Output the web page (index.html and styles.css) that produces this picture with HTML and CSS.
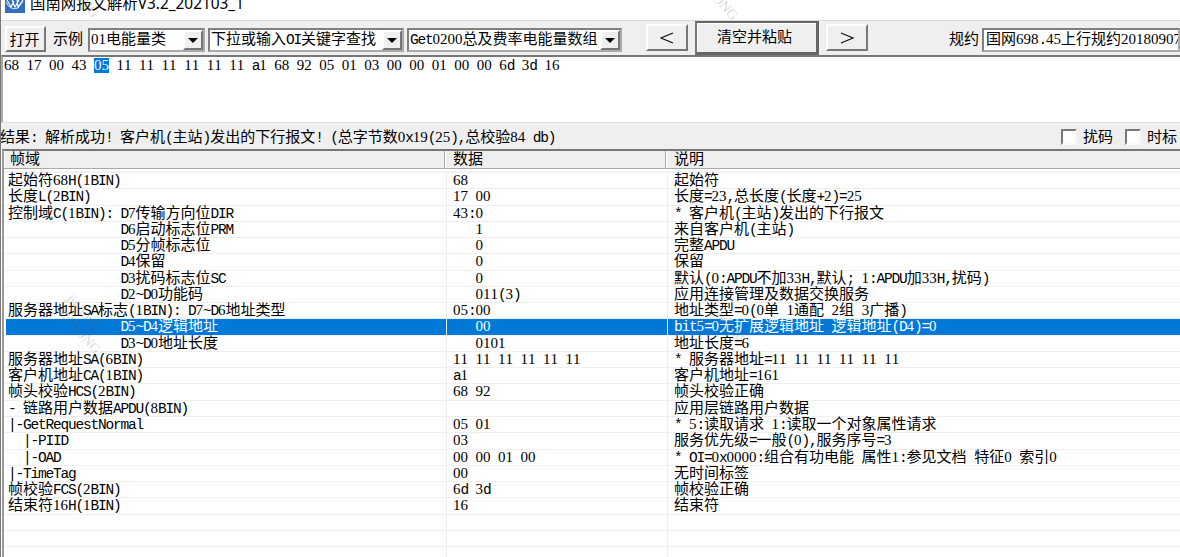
FILE: index.html
```html
<!DOCTYPE html>
<html lang="zh-CN">
<head>
<meta charset="utf-8">
<title>国南网报文解析</title>
<link rel="stylesheet" href="styles.css">
</head>
<body>
<div class="window">
  <header class="titlebar">
    <svg class="logo" width="20" height="17" viewBox="0 0 20 17"><rect width="20" height="17" fill="#2f6fbe"/><path d="M2 4L6 11L9 5M7 4L10 11L14 4M12 4L13 11L18 4" fill="none" stroke="#fff" stroke-width="1.1"/><path d="M1 6Q5 15 13 12L18 5" fill="none" stroke="#fff" stroke-width=".8"/></svg>
    <span class="title">国南网报文解析V3.2_202103_1</span>
  </header>
  <div class="toolbar">
    <button class="btn open">打开</button>
    <span class="label sample">示例</span>
    <div class="combo c1"><span class="m">01电能量类</span><b class="arrow"></b></div>
    <div class="combo c2"><span class="m">下拉或输入OI关键字查找</span><b class="arrow"></b></div>
    <div class="combo c3"><span class="m">Get0200总及费率电能量数组</span><b class="arrow"></b></div>
    <button class="btn nav prev"><svg width="14" height="12"><path d="M13 1L1 6L13 11" fill="none" stroke="#111" stroke-width="1.2"/></svg></button>
    <button class="btn paste">清空并粘贴</button>
    <button class="btn nav"><svg width="14" height="12"><path d="M1 1L13 6L1 11" fill="none" stroke="#111" stroke-width="1.2"/></svg></button>
    <span class="label rule">规约</span>
    <div class="combo c4"><span class="m">国网698.45上行规约20180907</span></div>
  </div>
  <div class="message m">68 17 00 43 <mark>05</mark> 11 11 11 11 11 11 a1 68 92 05 01 03 00 00 01 00 00 6d 3d 16</div>
  <div class="status">
    <span class="m">结果: 解析成功! 客户机(主站)发出的下行报文! (总字节数0x19(25),总校验84 db)</span>
    <div class="checks"><i class="box"></i><span>扰码</span><i class="box"></i><span>时标</span></div>
  </div>
  <div class="grid">
    <div class="head"><span>帧域</span><span>数据</span><span>说明</span></div>
    <div class="rows" id="rows"></div>
  </div>
</div>
<div class="wm w1">NDONG</div>
<div class="wm w2">INDONG</div>
<div class="wm w3">jindong<br>JINDONG</div>
<div class="wm w4">indong</div>
<script src="app.js"></script>
</body>
</html>
```

FILE: styles.css
```css
* { box-sizing: border-box; }
body { margin: 0; overflow: hidden; background: #fff; color: #000; font: 15px/16px "Liberation Mono", "Noto Sans CJK SC", monospace; }
.window { width: 1180px; height: 557px; overflow: hidden; display: flex; flex-direction: column; border-left: 1px solid #777; }
.m, .title, .label, .btn, .row > span { white-space: pre; }
.titlebar { height: 20px; flex: none; display: flex; overflow: hidden; }
.logo { margin: -4px 0 0 4px; flex: none; }
.title { font: 15.4px/24px "Noto Sans", "Noto Sans CJK SC", sans-serif; margin: -8px 0 0 5px; }
.toolbar { height: 35px; flex: none; background: #efefef; border-top: 1px solid #d8d8d8; display: flex; }
.btn { font: 15px/16px "Noto Sans CJK SC", sans-serif; color: #000; padding: 0; background: #efefef; border: 2px solid; border-color: #fff #777 #777 #fff; display: flex; align-items: center; justify-content: center; flex: none; }
.open { width: 41px; height: 26px; margin: 5px 0 0 4px; padding-right: 2px; }
.label { flex: none; line-height: 16px; margin-top: 12px; }
.sample { margin-left: 7px; width: 30px; }
.rule { margin-left: 81px; width: 30px; }
.combo { height: 24px; margin-top: 7px; flex: none; border: 2px solid; border-color: #808080 #aaa #aaa #808080; background: #fff; display: flex; justify-content: space-between; line-height: 22px; padding-left: 1px; overflow: hidden; }
.c1 { width: 117px; margin-left: 5px; }
.c2 { width: 196px; margin-left: 3px; }
.c3 { width: 215px; margin-left: 3px; }
.c4 { width: 198px; margin-left: 3px; padding-left: 2px; flex: none; }
.arrow { width: 20px; height: 20px; flex: none; background: #efefef; border: 2px solid; border-color: #fff #777 #777 #fff; display: flex; align-items: center; justify-content: center; }
.arrow::after { content: ""; border: 5px solid transparent; border-top: 5px solid #000; border-bottom: 0; }
.nav { width: 42px; height: 27px; margin-top: 3px; }
.prev { margin-left: 24px; }
.paste { width: 124px; height: 34px; margin: 0 7px 0 7px; padding: 0 4px 4px 0; border-width: 2px 3px 3px 2px; border-color: #666 #666 #666 #777; box-shadow: inset 1px 1px #fff; }
.message { height: 67px; flex: none; border-top: 2px solid #777; border-left: 2px solid #aaa; padding: 1px 0 0 1px; }
.message mark { background: #0078d7; color: #fff; display: inline-block; height: 15px; line-height: 15px; }
.status { height: 27px; flex: none; background: #efefef; border-top: 1px solid #e0e0e0; display: flex; justify-content: space-between; line-height: 19px; padding-top: 6px; }
.status > .m { margin-left: -1px; }
.checks { display: flex; padding-right: 3px; }
.box { width: 16px; height: 16px; background: #fff; border: 2px solid; border-color: #777 #f8f8f8 #f8f8f8 #777; margin: 0 6px 0 12px; }
.grid { flex: 1; border-top: 2px solid #777; border-left: 2px solid #999; margin-left: 1px; overflow: hidden; }
.head { height: 18px; background: #efefef; border-bottom: 1px solid #aaa; display: grid; grid-template-columns: 441px 221px 1fr; line-height: 20px; }
.head span { height: 17px; padding-left: 8px; border-right: 1px solid #aaa; box-shadow: inset 1px 0 #fff; }
.head span:first-child { padding-left: 6px; }
.head span:last-child, .row > span:last-child { border-right: 0; }
.rows { margin-top: 2px; border-top: 2px solid #f2f2f2; }
.row { height: 16.27px; display: grid; grid-template-columns: 443px 221px 1fr; border-bottom: 1px solid #efefef; }
.row > span { padding-left: 4px; border-right: 1px solid #efefef; line-height: 18px; height: 16.27px; }
.row > span + span { padding-left: 6px; }
.row.sel { color: #fff; background: linear-gradient(90deg, #fff 2px, #0078d7 2px); }
.a { font: 14.5px/1 "Liberation Mono", monospace; letter-spacing: -1.2px; }
.d { font: 15px/1 "Liberation Serif", serif; font-kerning: none; }
.wm { position: absolute; font: 14px/16px "Liberation Serif", serif; color: rgba(110,110,110,.28); transform: rotate(48deg); transform-origin: 0 0; white-space: nowrap; pointer-events: none; }
.w1 { left: 68px; top: -27px; }
.w2 { left: 704px; top: -28px; }
.w3 { left: 75px; top: 291px; }
.w4 { left: 722px; top: 305px; }
```

FILE: app.js
```js
const sp = n => ' '.repeat(n);
const rows = [
  ['起始符68H(1BIN)', '68', '起始符'],
  ['长度L(2BIN)', '17 00', '长度=23,总长度(长度+2)=25'],
  ['控制域C(1BIN): D7传输方向位DIR', '43:0', '* 客户机(主站)发出的下行报文'],
  [sp(15) + 'D6启动标志位PRM', '   1', '来自客户机(主站)'],
  [sp(15) + 'D5分帧标志位', '   0', '完整APDU'],
  [sp(15) + 'D4保留', '   0', '保留'],
  [sp(15) + 'D3扰码标志位SC', '   0', '默认(0:APDU不加33H,默认; 1:APDU加33H,扰码)'],
  [sp(15) + 'D2~D0功能码', '   011(3)', '应用连接管理及数据交换服务'],
  ['服务器地址SA标志(1BIN): D7~D6地址类型', '05:00', '地址类型=0(0单 1通配 2组 3广播)'],
  [sp(15) + 'D5~D4逻辑地址', '   00', 'bit5=0无扩展逻辑地址 逻辑地址(D4)=0'],
  [sp(15) + 'D3~D0地址长度', '   0101', '地址长度=6'],
  ['服务器地址SA(6BIN)', '11 11 11 11 11 11', '* 服务器地址=11 11 11 11 11 11'],
  ['客户机地址CA(1BIN)', 'a1', '客户机地址=161'],
  ['帧头校验HCS(2BIN)', '68 92', '帧头校验正确'],
  ['- 链路用户数据APDU(8BIN)', '', '应用层链路用户数据'],
  ['|-GetRequestNormal', '05 01', '* 5:读取请求 1:读取一个对象属性请求'],
  ['  |-PIID', '03', '服务优先级=一般(0),服务序号=3'],
  ['  |-OAD', '00 00 01 00', '* OI=0x0000:组合有功电能 属性1:参见文档 特征0 索引0'],
  ['|-TimeTag', '00', '无时间标签'],
  ['帧校验FCS(2BIN)', '6d 3d', '帧校验正确'],
  ['结束符16H(1BIN)', '16', '结束符'],
  ['', '', ''], ['', '', ''], ['', '', '']
];
const host = document.getElementById('rows');
rows.forEach((r, i) => {
  const row = document.createElement('div');
  row.className = 'row' + (i === 9 ? ' sel' : '');
  r.forEach(t => {
    const c = document.createElement('span');
    c.textContent = t;
    row.append(c);
  });
  host.append(row);
});

// Latin runs and digits take half the width of a Chinese character.
function halfWidth(node) {
  if (node.nodeType === 3) {
    const f = document.createDocumentFragment();
    (node.data.match(/[0-9]+|[\x20-\x2f\x3a-\x7e]+|[^\x20-\x7e]+/g) || []).forEach(p => {
      if (p.charCodeAt(0) < 127) {
        const s = document.createElement('span');
        s.className = /[0-9]/.test(p) ? 'd' : 'a';
        s.textContent = p;
        f.append(s);
      } else f.append(p);
    });
    node.replaceWith(f);
  } else [...node.childNodes].forEach(halfWidth);
}
document.querySelectorAll('.m, .row > span').forEach(halfWidth);
```
